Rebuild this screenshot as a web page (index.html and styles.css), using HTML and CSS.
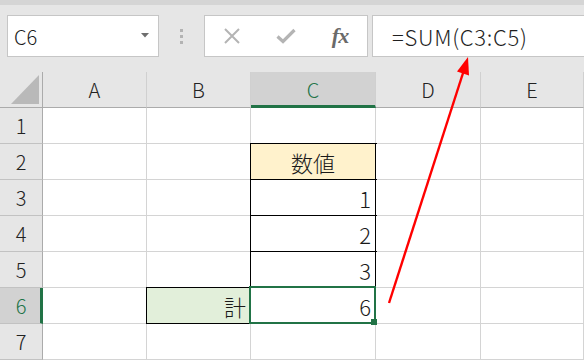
FILE: index.html
```html
<!DOCTYPE html>
<html lang="ja">
<head>
<meta charset="utf-8">
<link rel="stylesheet" href="styles.css">
</head>
<body>
<div class="app">
  <div class="topband"></div>
  <div class="fbar">
    <div class="namebox">
      <span class="ref">C6</span>
      <svg class="dd" width="8" height="5" viewBox="0 0 8 5"><path d="M0 0 H8 L4 4.5 Z" fill="#6e6e6e"/></svg>
    </div>
    <div class="grip"><i></i><i></i><i></i></div>
    <div class="btns">
      <span class="btn"><svg width="18" height="16" viewBox="0 0 18 16"><path d="M2 1 L16 15 M16 1 L2 15" stroke="#b4b4b4" stroke-width="2" fill="none"/></svg></span>
      <span class="btn"><svg width="20" height="16" viewBox="0 0 20 16"><path d="M1.5 8.5 L7 13.5 L18.5 2" stroke="#b4b4b4" stroke-width="3.2" fill="none"/></svg></span>
      <span class="btn fx">fx</span>
    </div>
    <div class="formula">=SUM(C3:C5)</div>
  </div>
  <div class="sheet">
    <div class="corner"><svg width="29" height="29" viewBox="0 0 29 29"><path d="M0 29 L28 0 V29 Z" fill="#b9b9b9"/></svg></div>
    <div class="ch">A</div>
    <div class="ch">B</div>
    <div class="ch selc">C</div>
    <div class="ch">D</div>
    <div class="ch">E</div>

    <div class="rh">1</div>
    <div class="c"></div><div class="c"></div><div class="c"></div><div class="c"></div><div class="c"></div>

    <div class="rh">2</div>
    <div class="c"></div><div class="c"></div><div class="c bx head">数値</div><div class="c"></div><div class="c"></div>

    <div class="rh">3</div>
    <div class="c"></div><div class="c"></div><div class="c bx num">1</div><div class="c"></div><div class="c"></div>

    <div class="rh">4</div>
    <div class="c"></div><div class="c"></div><div class="c bx num">2</div><div class="c"></div><div class="c"></div>

    <div class="rh">5</div>
    <div class="c"></div><div class="c"></div><div class="c bx num">3</div><div class="c"></div><div class="c"></div>

    <div class="rh selr">6</div>
    <div class="c"></div><div class="c bx total num">計</div><div class="c num active">6</div><div class="c"></div><div class="c"></div>

    <div class="rh">7</div>
    <div class="c"></div><div class="c"></div><div class="c"></div><div class="c"></div><div class="c"></div>
  </div>
  <svg class="arrow" width="584" height="360" viewBox="0 0 584 360">
    <line x1="389" y1="303" x2="464" y2="70" stroke="#ff0000" stroke-width="2.4"/>
    <polygon points="468,57 469,75.5 457,71.5" fill="#ff0000"/>
  </svg>
</div>
</body>
</html>
```
FILE: styles.css
```css
* { box-sizing: border-box; }
html, body { margin: 0; padding: 0; }
body { background: #e6e6e6; }
.app {
  position: relative;
  width: 584px;
  height: 360px;
  overflow: hidden;
  background: #e6e6e6;
  font-family: "Noto Sans CJK JP", "Noto Sans", sans-serif;
  font-weight: 300;
  color: #1a1a1a;
}
.topband { height: 5px; background: #d5d5d5; }
.fbar {
  display: flex;
  align-items: flex-start;
  height: 67px;
  padding-top: 10px;
  padding-left: 7px;
}
.namebox {
  width: 152px;
  height: 42px;
  background: #fff;
  border: 1px solid #c6c6c6;
  display: flex;
  align-items: center;
  justify-content: space-between;
  padding: 0 9px 0 6px;
}
.ref { font-size: 20px; line-height: 1; position: relative; top: 1px; }
.dd { margin-top: -2px; }
.grip {
  width: 45px;
  height: 42px;
  display: flex;
  flex-direction: column;
  align-items: center;
  justify-content: center;
  gap: 3px;
}
.grip i { display: block; width: 3px; height: 3px; background: #b3b3b3; }
.btns {
  width: 164px;
  height: 42px;
  background: #fff;
  border: 1px solid #c6c6c6;
  display: flex;
  align-items: center;
  padding-left: 11px;
  gap: 22px;
  margin-right: 4px;
}
.btn { width: 32px; display: flex; justify-content: center; align-items: center; }
.fx {
  font-family: "Liberation Serif", serif;
  font-style: italic;
  font-weight: bold;
  font-size: 22px;
  color: #6a6a6a;
  letter-spacing: -1px;
}
.formula {
  flex: 1;
  height: 42px;
  margin-right: -2px;
  background: #fff;
  border: 1px solid #c6c6c6;
  display: flex;
  align-items: center;
  padding-left: 19px;
  font-size: 22px;
  letter-spacing: 0.7px;
  color: #1f1f1f;
}
.sheet {
  display: grid;
  grid-template-columns: 43px 104px 104px 125px 105px 1fr;
  grid-auto-rows: 36px;
}
.corner {
  background: #e6e6e6;
  border-right: 1px solid #ababab;
  border-bottom: 1px solid #ababab;
  padding: 3px 0 0 11px;
}
.corner svg { display: block; }
.ch {
  background: #e6e6e6;
  border-right: 1px solid #d0d0d0;
  border-bottom: 1px solid #ababab;
  display: flex;
  align-items: center;
  justify-content: center;
  font-size: 20px;
  color: #222;
}
.selc { background: #d2d2d2; color: #217346; border-bottom: 3px solid #217346; padding-top: 2px; }
.rh {
  background: #e6e6e6;
  border-right: 1px solid #ababab;
  border-bottom: 1px solid #c2c2c2;
  display: flex;
  align-items: center;
  justify-content: center;
  font-size: 20px;
  color: #222;
}
.selr { background: #d2d2d2; color: #217346; border-right: 3px solid #217346; padding-left: 2px; }
.c {
  background: #fff;
  border-right: 1px solid #d4d4d4;
  border-bottom: 1px solid #d4d4d4;
  display: flex;
  align-items: center;
  padding: 0 4px;
  font-size: 22px;
  color: #1a1a1a;
}
.num { justify-content: flex-end; }
.head { justify-content: center; background: #fff2cc; }
.total { background: #e2efda; }
.bx {
  border-right-color: #000;
  border-bottom-color: #000;
  box-shadow: 0 0 0 1px #000;
}
.active { position: relative; }
.active::after {
  content: "";
  position: absolute;
  left: -2px; top: -2px; right: -1px; bottom: -1px;
  border: 2px solid #217346;
}
.active::before {
  content: "";
  position: absolute;
  right: -2px; bottom: -2px;
  width: 6px; height: 6px;
  background: #217346;
  z-index: 1;
}
.arrow { position: absolute; left: 0; top: 0; pointer-events: none; }
```
